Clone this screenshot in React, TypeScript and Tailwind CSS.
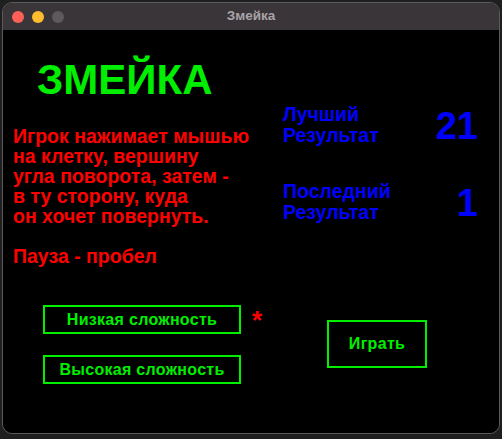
import React from 'react';

const font = { fontFamily: '"Liberation Sans", Arial, sans-serif' };

function TitleBar() {
  return (
    <div className="relative flex h-[27px] shrink-0 items-center bg-[#3a3539] px-[9px]">
      <div className="flex items-center gap-[8px]">
        <span className="h-[12px] w-[12px] rounded-full bg-[#fe5f57]" />
        <span className="h-[12px] w-[12px] rounded-full bg-[#febc2e]" />
        <span className="h-[12px] w-[12px] rounded-full bg-[#5e595d]" />
      </div>
      <div className="absolute inset-0 flex items-center justify-center text-[13.5px] font-bold text-[#a9a4a8]">
        Змейка
      </div>
    </div>
  );
}

function ScoreRow({ label, value, className = '' }: { label: string; value: string; className?: string }) {
  return (
    <div className={`flex items-end justify-between pr-[21px] ${className}`}>
      <div className="text-[19.5px] font-bold leading-[21px] text-[#0000ff]">
        {label}
        <br />
        Результат
      </div>
      <div className="text-[38px] font-bold leading-[40px] text-[#0000ff]">{value}</div>
    </div>
  );
}

const btn =
  'flex items-center justify-center border-2 border-[#00ee00] text-[16px] font-bold tracking-[0.3px] text-[#00ee00]';

export default function App() {
  return (
    <div className="h-[439px] w-[502px] bg-[#1f1f1f] px-[2px] pt-[2px] pb-[5px]" style={font}>
      <div className="flex h-full flex-col overflow-hidden rounded-[10px] border border-[#5b5b5b]">
        <TitleBar />
        <div className="flex flex-1 bg-black">
          {/* left side: title, rules, difficulty */}
          <div className="w-[280px] shrink-0 pl-[10px]">
            <h1 className="mt-[30px] ml-[24px] text-[42px] font-bold leading-[40px] text-[#00ee00]">ЗМЕЙКА</h1>
            <p className="mt-[26px] text-[19.5px] font-bold leading-[20px] text-[#ff0000]">
              Игрок нажимает мышью
              <br />
              на клетку, вершину
              <br />
              угла поворота, затем -
              <br />
              в ту сторону, куда
              <br />
              он хочет повернуть.
              <br />
              <br />
              Пауза - пробел
            </p>
            <div className="mt-[39px] ml-[30px] flex items-start">
              <button className={`${btn} h-[29px] w-[198px]`}>Низкая сложность</button>
              <span className="ml-[11px] mt-[2px] text-[26px] font-bold leading-[26px] text-[#ff0000]">*</span>
            </div>
            <button className={`${btn} mt-[21px] ml-[30px] h-[29px] w-[198px]`}>Высокая сложность</button>
          </div>

          {/* right side: scores and play */}
          <div className="flex-1">
            <ScoreRow label="Лучший" value="21" className="mt-[74px]" />
            <ScoreRow label="Последний" value="1" className="mt-[35px]" />
            <button className={`${btn} mt-[97px] ml-[44px] h-[48px] w-[100px]`}>Играть</button>
          </div>
        </div>
      </div>
    </div>
  );
}
